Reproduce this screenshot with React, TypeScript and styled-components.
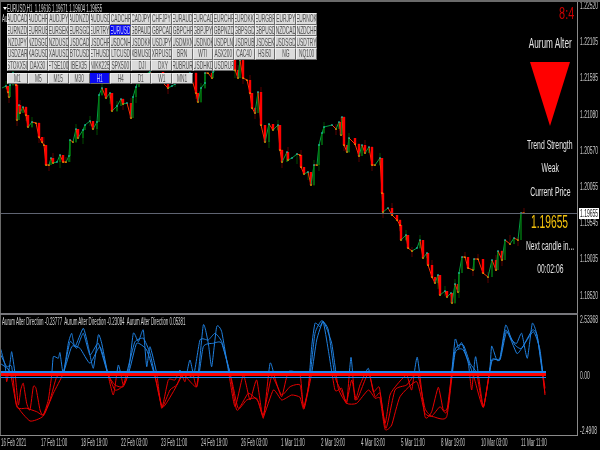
import React from 'react';
import styled, { createGlobalStyle } from 'styled-components';

const GlobalStyle = createGlobalStyle`
  html, body { margin: 0; padding: 0; background: #000; }
  body { font-family: "Liberation Sans", Arial, sans-serif; }
`;

const GRAY = '#8a8a8a';

const Terminal = styled.div`
  width: 600px;
  height: 450px;
  background: #000;
  overflow: hidden;
  display: flex;
  flex-direction: column;
  border-top: 2px solid #6a6a6a;
  box-sizing: border-box;
`;
const PaneRow = styled.div<{ $h: number }>`
  display: flex;
  height: ${(p) => p.$h}px;
  flex: none;
`;
const ChartBox = styled.div`
  position: relative;
  flex: none;
  width: 576px;
  border-left: 1px solid #6a6a6a;
  border-right: 1px solid ${GRAY};
  overflow: hidden;
  svg { display: block; }
`;
const Divider = styled.div`
  height: 2px;
  flex: none;
  width: 578px;
  background: #77777c;
`;
const BottomLine = styled.div`
  height: 1px;
  flex: none;
  width: 578px;
  background: ${GRAY};
`;
const Squeeze = styled.span<{ $sx?: number; $o?: string }>`
  display: inline-block;
  white-space: pre;
  transform: scaleX(${(p) => p.$sx ?? 0.44});
  transform-origin: ${(p) => p.$o ?? 'left'} center;
  filter: blur(0.25px);
`;
const PriceScale = styled.div`
  position: relative;
  flex: none;
  width: 22px;
  display: grid;
  grid-auto-rows: 36.2px;
  color: #c8c8c8;
  font-size: 10px;
  line-height: 8px;
  align-content: start;
`;
const ScaleLabel = styled.div`
  padding-left: 2px;
  height: 8px;
  overflow: visible;
`;
const PriceTag = styled.div`
  position: absolute;
  left: 1px;
  top: 206px;
  width: 20px;
  height: 11px;
  background: #fff;
  color: #111;
  font-size: 10px;
  line-height: 11px;
  padding-left: 1px;
  box-sizing: border-box;
`;
const SubScale = styled.div`
  flex: none;
  width: 22px;
  display: flex;
  flex-direction: column;
  justify-content: space-between;
  padding: 1px 0 0;
  color: #c8c8c8;
  font-size: 10px;
  line-height: 8px;
  height: 119px;
`;
const TimeAxis = styled.div`
  display: flex;
  flex: none;
  height: 14px;
  padding-top: 2px;
  padding-left: 1px;
  color: #c8c8c8;
  font-size: 10px;
  line-height: 10px;
`;
const TimeCell = styled.div`
  width: 40px;
  flex: none;
`;
const Legend = styled.div<{ $l: number; $t: number; $clip?: number }>`
  position: absolute;
  left: ${(p) => p.$l}px;
  top: ${(p) => p.$t}px;
  width: ${(p) => (p.$clip ? `${p.$clip}px` : 'auto')};
  overflow: ${(p) => (p.$clip ? 'hidden' : 'visible')};
  color: #d4d4d4;
  font-size: 10px;
  line-height: 9px;
`;
const Arrow = styled.span`
  position: absolute;
  left: -4px;
  top: 3px;
  width: 0;
  height: 0;
  border-left: 2px solid transparent;
  border-right: 2px solid transparent;
  border-top: 3px solid #fff;
`;
const ButtonPanel = styled.div`
  position: absolute;
  left: 6px;
  top: 11px;
  display: flex;
  flex-direction: column;
  gap: 2px;
`;
const SymbolGrid = styled.div`
  display: grid;
  grid-template-columns: repeat(15, 20.65px);
  grid-auto-rows: 11.7px;
`;
const FrameGrid = styled.div`
  display: grid;
  grid-template-columns: repeat(9, 20.65px);
  grid-auto-rows: 11px;
`;
const Btn = styled.div<{ $on?: boolean }>`
  display: flex;
  align-items: center;
  justify-content: center;
  overflow: hidden;
  box-sizing: border-box;
  background: ${(p) => (p.$on ? '#0a0af0' : '#dbdbdb')};
  color: ${(p) => (p.$on ? '#c8c8ff' : '#505050')};
  border-top: 1px solid ${(p) => (p.$on ? '#0a0af0' : '#efefef')};
  border-left: 1px solid ${(p) => (p.$on ? '#0a0af0' : '#efefef')};
  border-right: 1px solid #6c6c6c;
  border-bottom: 1px solid #6c6c6c;
  font-size: 10.5px;
  line-height: 9px;
`;
const InfoPanel = styled.div`
  position: absolute;
  left: 520px;
  top: 0;
  width: 58px;
  display: flex;
  flex-direction: column;
  align-items: center;
  color: #e6e6e6;
  font-size: 12px;
`;
const InfoLine = styled.div<{ $h: number; $top: number; $color?: string; $size?: number }>`
  height: ${(p) => p.$h}px;
  line-height: ${(p) => p.$h}px;
  margin-top: ${(p) => p.$top}px;
  color: ${(p) => p.$color ?? 'inherit'};
  font-size: ${(p) => p.$size ?? 12}px;
  text-align: center;
  flex: none;
`;
const Clock = styled.div`
  align-self: flex-end;
  margin-right: 5px;
  margin-top: 4px;
  height: 16px;
  line-height: 16px;
  color: #cc0000;
  font-size: 16px;
  flex: none;
`;
const DownTriangle = styled.div`
  width: 0;
  height: 0;
  flex: none;
  margin-top: 11px;
  border-left: 20.5px solid transparent;
  border-right: 20.5px solid transparent;
  border-top: 64px solid #ff0000;
`;

const symbols = [
  'AUDCAD', 'AUDCHF', 'AUDJPY', 'AUDNZD', 'AUDUSD', 'CADCHF', 'CADJPY', 'CHFJPY', 'EURAUD', 'EURCAD', 'EURCHF', 'EURDKK', 'EURGBP', 'EURJPY', 'EURNOK',
  'EURNZD', 'EURRUB', 'EURSEK', 'EURSGD', 'EURTRY', 'EURUSD', 'GBPAUD', 'GBPCAD', 'GBPCHF', 'GBPJPY', 'GBPNZD', 'GBPSGD', 'GBPUSD', 'NZDCAD', 'NZDCHF',
  'NZDJPY', 'NZDSGD', 'NZDUSD', 'USDCAD', 'USDCHF', 'USDCNH', 'USDDKK', 'USDJPY', 'USDMXN', 'USDNOK', 'USDPLN', 'USDRUB', 'USDSEK', 'USDSGD', 'USDTRY',
  'USDZAR', 'XAGUSD', 'XAUUSD', 'BTCUSD', 'ETHUSD', 'LTCUSD', 'XBMUSD', 'XRPUSD', 'BRN', 'WTI', 'ASX200', 'CAC40', 'HSI50', 'NG', 'NQ100',
  'STOXX50', 'DAX30', 'FTSE100', 'IBEX35', 'NIKK225', 'SPX500', '_DJI', '_DXY', 'RUBRUR', 'USDHKD', 'USDRUP',
];
const frames = ['M1', 'M5', 'M15', 'M30', 'H1', 'H4', 'D1', 'W1', 'MN1'];
const prices = ['1.22520', '1.22105', '1.21595', '1.21080', '1.20570', '1.20055', '1.19545', '1.19035', '1.18520'];
const times = ['16 Feb 2021', '17 Feb 11:00', '18 Feb 19:00', '22 Feb 03:00', '23 Feb 11:00', '24 Feb 19:00', '26 Feb 03:00', '1 Mar 11:00', '2 Mar 19:00', '4 Mar 03:00', '5 Mar 11:00', '8 Mar 19:00', '10 Mar 03:00', '11 Mar 11:00'];

type P = number[];

// close line read off the chart, in page pixels
const closes: P[] = [
  [2,88],[6,86],[8,92],[9,97],[10,85],[13,73],[16,85],[17,120],[19,105],[20,113],[23,107],[26,115],[28,127],[32,122],[36,123],[39,137],[42,142],[44,145],[46,165],[49,165],[51,158],[53,163],[57,162],[60,155],[63,162],[66,162],[69,156],[70,140],[73,142],[76,129],[78,138],[83,130],[85,125],[90,121],[93,129],[97,122],[99,95],[102,88],[106,98],[110,93],[112,111],[117,106],[121,99],[123,104],[127,103],[131,118],[133,97],[136,87],[139,78],[150,72],[163,83],[168,88],[172,86],[175,84],[190,73],[196,93],[198,102],[201,88],[205,83],[205,73],[208,73],[212,78],[213,72],[235,58],[235,70],[238,78],[240,60],[243,78],[247,80],[250,93],[252,108],[255,113],[258,92],[261,125],[265,142],[269,124],[273,130],[278,125],[280,150],[282,162],[287,152],[288,160],[292,158],[297,154],[300,155],[301,167],[304,174],[308,172],[311,185],[314,165],[317,165],[319,145],[322,133],[324,127],[332,125],[336,129],[339,122],[341,135],[342,117],[344,145],[347,152],[349,138],[355,144],[359,156],[362,145],[365,153],[369,147],[372,165],[375,165],[380,158],[382,193],[383,212],[388,208],[392,215],[397,220],[400,225],[401,240],[406,235],[408,248],[412,251],[417,248],[420,240],[423,258],[427,253],[428,265],[432,277],[435,283],[438,275],[440,295],[445,291],[447,297],[451,293],[452,303],[455,284],[458,292],[459,273],[462,257],[465,257],[468,268],[473,270],[474,259],[478,259],[483,273],[488,277],[492,260],[496,270],[498,251],[502,260],[505,240],[510,244],[514,238],[518,240],[521,213],[524,213],
];

// direction lines, read off the zoomed sub window (3x, page offset added below)
const leftA: P[] = [[0,110],[15,165],[20,215],[30,160],[35,125],[45,190],[55,285],[62,240],[70,220],[80,280],[90,300],[100,230],[108,235],[120,300],[130,315],[145,270],[155,195],[160,140],[175,145],[180,128],[190,190],[205,100],[215,70],[225,110],[250,55],[265,110],[280,175],[295,75],[305,100],[320,175],[340,255],[355,165],[370,225],[385,190],[400,70],[415,95],[430,60],[440,170],[450,110],[470,190],[485,295],[505,210],[525,210],[540,180],[555,215],[570,150],[590,230],[610,45],[625,100],[635,170],[650,50],[665,65],[685,180],[705,290],[730,195],[750,270],[770,210],[790,325],[810,160],[825,205],[845,260],[865,185],[900,195]];
const leftB: P[] = [[0,130],[20,170],[35,170],[50,290],[80,295],[110,305],[130,315],[150,270],[170,200],[190,190],[210,95],[230,115],[250,70],[270,135],[295,100],[320,180],[345,240],[370,225],[390,150],[405,95],[430,85],[450,130],[470,220],[487,290],[510,240],[530,225],[550,185],[580,200],[600,90],[625,90],[645,70],[665,95],[690,190],[710,300],[740,270],[770,265],[790,315],[815,200],[845,255],[870,230],[900,225]];
const leftC: P[] = [[0,160],[30,185],[50,285],[90,333],[130,318],[160,250],[190,190],[215,110],[240,115],[270,160],[300,110],[325,195],[345,225],[370,230],[390,175],[410,100],[440,120],[465,200],[487,292],[520,245],[550,195],[590,230],[610,110],[640,100],[665,100],[695,210],[715,295],[745,250],[775,275],[790,320],[820,240],[845,270],[875,255],[900,262]];
const rightA: P[] = [[0,230],[10,290],[25,235],[35,110],[45,40],[60,50],[70,35],[85,120],[105,240],[125,235],[140,280],[153,142],[165,270],[180,225],[205,175],[220,245],[238,232],[255,340],[270,255],[290,225],[320,195],[335,240],[352,142],[375,320],[395,305],[415,232],[430,300],[445,285],[465,90],[475,115],[485,98],[505,160],[515,240],[527,140],[550,290],[570,170],[575,108],[590,150],[600,145],[617,45],[635,90],[650,100],[665,70],[682,145],[697,40],[712,80],[735,235]];
const rightB: P[] = [[0,260],[12,295],[30,200],[45,70],[65,32],[85,60],[105,200],[125,245],[140,275],[155,210],[170,270],[205,190],[225,260],[240,250],[258,355],[285,240],[320,225],[352,190],[375,295],[395,318],[420,290],[440,305],[465,120],[490,105],[510,160],[530,190],[550,292],[575,155],[600,145],[617,60],[645,105],[665,115],[697,60],[712,80],[735,250]];
const rightC: P[] = [[0,280],[12,297],[35,190],[50,90],[70,35],[95,100],[115,235],[140,280],[170,280],[205,240],[225,265],[240,265],[255,358],[275,345],[300,260],[350,215],[375,310],[400,320],[440,320],[465,130],[490,120],[520,195],[550,292],[575,150],[600,150],[620,65],[650,130],[665,115],[700,65],[720,120],[735,255]];

const toPage = (left: P[], right: P[]): P[] => [
  ...left.map(([x, y]) => [x / 3, 310 + y / 3]),
  ...right.slice(1).map(([x, y]) => [300 + x / 3, 310 + y / 3]),
];
const directionLines = [toPage(leftA, rightA), toPage(leftB, rightB), toPage(leftC, rightC)];

const smooth = (pts: P[]) => {
  let d = `M${pts[0][0]} ${pts[0][1]}`;
  for (let i = 0; i < pts.length - 1; i++) {
    const a = pts[Math.max(i - 1, 0)];
    const b = pts[i];
    const c = pts[i + 1];
    const e = pts[Math.min(i + 2, pts.length - 1)];
    const c1x = b[0] + (c[0] - a[0]) / 12;
    const c1y = b[1] + (c[1] - a[1]) / 12;
    const c2x = c[0] - (e[0] - b[0]) / 12;
    const c2y = c[1] - (e[1] - b[1]) / 12;
    d += `C${c1x.toFixed(1)} ${c1y.toFixed(1)} ${c2x.toFixed(1)} ${c2y.toFixed(1)} ${c[0].toFixed(1)} ${c[1].toFixed(1)}`;
  }
  return d;
};

function PriceChart() {
  return (
    <svg width="576" height="311" viewBox="1 2 576 311">
      {closes.slice(1).map((p, i) => {
        if (i % 2) return null;
        const q = closes[i];
        const up = p[1] < q[1];
        const top = Math.min(p[1], q[1]);
        const bottom = Math.max(p[1], q[1]);
        const long = i % 4 === 0;
        return (
          <line
            key={`w${i}`}
            x1={p[0]}
            x2={p[0]}
            y1={top - (long ? 5 : 1)}
            y2={bottom + (long ? 1 : 6)}
            stroke={up ? '#004a00' : '#5a0000'}
            strokeWidth="1"
          />
        );
      })}
      {closes.slice(1).map((p, i) => {
        const q = closes[i];
        const up = p[1] < q[1];
        const dy = Math.abs(p[1] - q[1]);
        return (
          <g key={`b${i}`}>
            <line
              x1={q[0]}
              y1={q[1]}
              x2={p[0]}
              y2={p[1]}
              stroke={up ? '#00a040' : '#ff3000'}
              strokeWidth="1"
            />
            {dy > 4 && (
              <rect
                x={p[0] - (up ? 0.7 : 1.2)}
                y={Math.min(p[1], q[1])}
                width={up ? 1.4 : 2.4}
                height={dy}
                fill={up ? '#007a10' : '#ff0000'}
              />
            )}
          </g>
        );
      })}
      {closes.slice(1).map((p, i) => {
        const up = p[1] < closes[i][1];
        return (
          <rect
            key={`d${i}`}
            x={p[0] - 0.7}
            y={up ? p[1] - 0.7 : p[1] - 0.5}
            width="1.4"
            height="1.4"
            fill={up ? '#1fd0c8' : '#f0b400'}
          />
        );
      })}
      <line x1="1" x2="577" y1="213.5" y2="213.5" stroke="#5f6472" strokeWidth="1" />
    </svg>
  );
}

function DirectionChart() {
  return (
    <svg width="576" height="120" viewBox="1 315 576 120">
      <defs>
        <clipPath id="above">
          <rect x="0" y="300" width="600" height="74" />
        </clipPath>
        <clipPath id="below">
          <rect x="0" y="374" width="600" height="70" />
        </clipPath>
      </defs>
      {directionLines.map((pts, i) => (
        <g key={i} fill="none" strokeWidth="1">
          <path d={smooth(pts)} stroke="#1f80e0" clipPath="url(#above)" />
          <path d={smooth(pts)} stroke="#e80000" clipPath="url(#below)" />
        </g>
      ))}
      <g shapeRendering="crispEdges">
        <rect x="1" y="371" width="545" height="2" fill="#2088f0" />
        <rect x="1" y="373" width="545" height="2" fill="#ff0000" />
        <rect x="1" y="375" width="545" height="1" fill="#ff0000" />
        <rect x="1" y="377" width="545" height="1" fill="#2088f0" />
      </g>
    </svg>
  );
}

function App() {
  return (
    <Terminal>
      <GlobalStyle />
      <PaneRow $h={311}>
        <ChartBox>
          <PriceChart />
          <Legend $l={6} $t={2}>
            <Arrow />
            <Squeeze>EURUSD,H1  1.19616 1.19671 1.19604 1.19655</Squeeze>
          </Legend>
          <Legend $l={1} $t={12} $clip={5}>
            <Squeeze>Aurum Alter</Squeeze>
          </Legend>
          <ButtonPanel>
            <SymbolGrid>
              {symbols.map((s) => (
                <Btn key={s} $on={s === 'EURUSD'}>
                  <Squeeze $sx={0.46} $o="center">{s}</Squeeze>
                </Btn>
              ))}
            </SymbolGrid>
            <FrameGrid>
              {frames.map((f) => (
                <Btn key={f} $on={f === 'H1'}>
                  <Squeeze $sx={0.46} $o="center">{f}</Squeeze>
                </Btn>
              ))}
            </FrameGrid>
          </ButtonPanel>
          <InfoPanel>
            <Clock><Squeeze $sx={0.68} $o="right">8:4</Squeeze></Clock>
            <InfoLine $h={16} $size={15} $top={13}><Squeeze $sx={0.55} $o="center">Aurum Alter</Squeeze></InfoLine>
            <DownTriangle />
            <InfoLine $h={13} $top={13}><Squeeze $sx={0.57} $o="center">Trend Strength</Squeeze></InfoLine>
            <InfoLine $h={13} $top={10}><Squeeze $sx={0.57} $o="center">Weak</Squeeze></InfoLine>
            <InfoLine $h={13} $top={11}><Squeeze $sx={0.57} $o="center">Current Price</Squeeze></InfoLine>
            <InfoLine $h={20} $size={18} $color="#f4c20d" $top={13}><Squeeze $sx={0.57} $o="center">1.19655</Squeeze></InfoLine>
            <InfoLine $h={13} $top={8}><Squeeze $sx={0.56} $o="center">Next candle in...</Squeeze></InfoLine>
            <InfoLine $h={13} $top={10}><Squeeze $sx={0.56} $o="center">00:02:06</Squeeze></InfoLine>
          </InfoPanel>
        </ChartBox>
        <PriceScale>
          {prices.map((p) => (
            <ScaleLabel key={p}><Squeeze $sx={0.5}>{p}</Squeeze></ScaleLabel>
          ))}
          <PriceTag><Squeeze $sx={0.5}>1.19655</Squeeze></PriceTag>
        </PriceScale>
      </PaneRow>
      <Divider />
      <PaneRow $h={120}>
        <ChartBox>
          <DirectionChart />
          <Legend $l={1} $t={2}>
            <Squeeze>Aurum Alter Direction -0.23777  Aurum Alter Direction -0.23084  Aurum Alter Direction 0.05381</Squeeze>
          </Legend>
        </ChartBox>
        <SubScale>
          <ScaleLabel><Squeeze $sx={0.5}>2.53368</Squeeze></ScaleLabel>
          <ScaleLabel><Squeeze $sx={0.5}>0.00</Squeeze></ScaleLabel>
          <ScaleLabel><Squeeze $sx={0.5}>-2.4908</Squeeze></ScaleLabel>
        </SubScale>
      </PaneRow>
      <BottomLine />
      <TimeAxis>
        {times.map((t) => (
          <TimeCell key={t}><Squeeze $sx={0.45}>{t}</Squeeze></TimeCell>
        ))}
      </TimeAxis>
    </Terminal>
  );
}

export default App;
